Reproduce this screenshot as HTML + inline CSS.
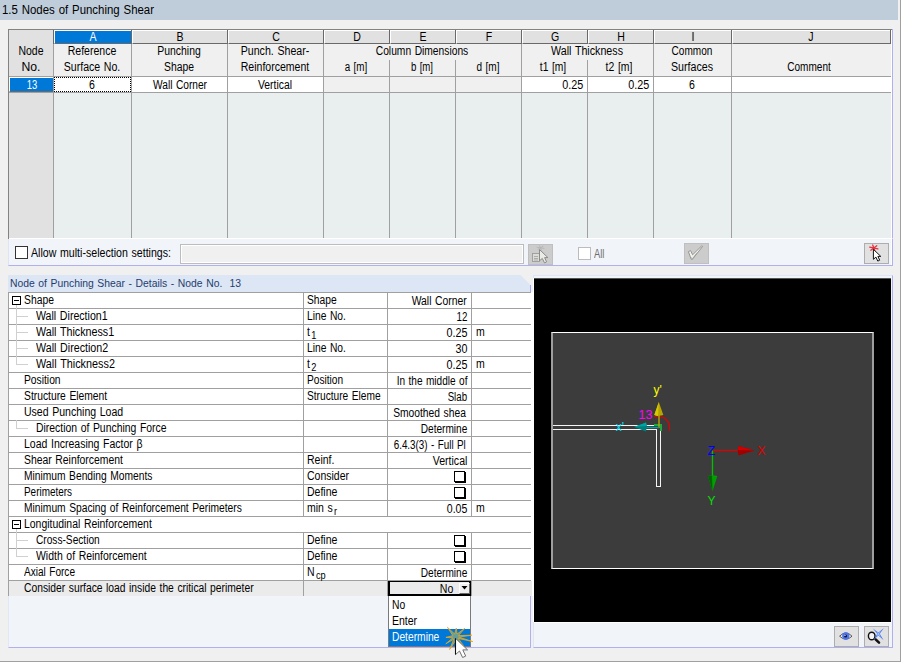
<!DOCTYPE html>
<html><head><meta charset="utf-8"><title>1.5 Nodes of Punching Shear</title>
<style>
html,body{margin:0;padding:0;}
body{width:901px;height:662px;position:relative;overflow:hidden;background:#f0f0f0;font-family:"Liberation Sans",sans-serif;}
body>div,body>span,body>svg{position:absolute;}
.t{white-space:nowrap;display:block;word-spacing:0.8px;}
sub{font-size:10.5px;vertical-align:baseline;position:relative;top:2.5px;margin-left:1.5px;line-height:0;}
</style></head><body>
<div style="left:0px;top:0px;width:898px;height:20px;background:#bfcddb;"></div>
<span class="t" style="left:2px;transform-origin:0 0;top:1px;font-size:12.5px;line-height:18px;color:#000;transform:scaleX(0.9128);">1.5 Nodes of Punching Shear</span>
<div style="left:900px;top:0px;width:1px;height:662px;background:#a0a0a0;"></div>
<div style="left:8px;top:29px;width:884px;height:209px;background:#e9eeee;border-left:1px solid #828282;border-top:1px solid #828282;box-sizing:border-box;"></div>
<div style="left:891px;top:30px;width:1px;height:208px;background:#fff;"></div>
<div style="left:892px;top:29px;width:1px;height:237px;background:#b0b0f0;"></div>
<div style="left:9px;top:30px;width:882px;height:46px;background:#f0f0f0;"></div>
<div style="left:9px;top:30px;width:44px;height:46px;background:#e1e1e1;"></div>
<div style="left:9px;top:92px;width:44px;height:146px;background:#e1e1e1;"></div>
<div style="left:54px;top:77px;width:837px;height:15px;background:#fff;"></div>
<div style="left:324px;top:77px;width:197px;height:15px;background:#f0f0f0;"></div>
<div style="left:54px;top:30px;width:77px;height:14px;background:#0078d7;box-sizing:border-box;border-top:1px solid #fff;border-left:1px solid #fff;border-bottom:1px solid #696969;"></div>
<span class="t" style="left:92.5px;transform-origin:50% 0;top:30px;font-size:12px;line-height:15px;color:#fff;transform:translateX(-50%) scaleX(0.88);">A</span>
<div style="left:132px;top:30px;width:95px;height:14px;background:#e1e1e1;box-sizing:border-box;border-top:1px solid #fff;border-left:1px solid #fff;border-bottom:1px solid #696969;"></div>
<span class="t" style="left:179.5px;transform-origin:50% 0;top:30px;font-size:12px;line-height:15px;color:#000;transform:translateX(-50%) scaleX(0.88);">B</span>
<div style="left:228px;top:30px;width:95px;height:14px;background:#e1e1e1;box-sizing:border-box;border-top:1px solid #fff;border-left:1px solid #fff;border-bottom:1px solid #696969;"></div>
<span class="t" style="left:275.5px;transform-origin:50% 0;top:30px;font-size:12px;line-height:15px;color:#000;transform:translateX(-50%) scaleX(0.88);">C</span>
<div style="left:324px;top:30px;width:65px;height:14px;background:#e1e1e1;box-sizing:border-box;border-top:1px solid #fff;border-left:1px solid #fff;border-bottom:1px solid #696969;"></div>
<span class="t" style="left:356.5px;transform-origin:50% 0;top:30px;font-size:12px;line-height:15px;color:#000;transform:translateX(-50%) scaleX(0.88);">D</span>
<div style="left:390px;top:30px;width:65px;height:14px;background:#e1e1e1;box-sizing:border-box;border-top:1px solid #fff;border-left:1px solid #fff;border-bottom:1px solid #696969;"></div>
<span class="t" style="left:422.5px;transform-origin:50% 0;top:30px;font-size:12px;line-height:15px;color:#000;transform:translateX(-50%) scaleX(0.88);">E</span>
<div style="left:456px;top:30px;width:65px;height:14px;background:#e1e1e1;box-sizing:border-box;border-top:1px solid #fff;border-left:1px solid #fff;border-bottom:1px solid #696969;"></div>
<span class="t" style="left:488.5px;transform-origin:50% 0;top:30px;font-size:12px;line-height:15px;color:#000;transform:translateX(-50%) scaleX(0.88);">F</span>
<div style="left:522px;top:30px;width:65px;height:14px;background:#e1e1e1;box-sizing:border-box;border-top:1px solid #fff;border-left:1px solid #fff;border-bottom:1px solid #696969;"></div>
<span class="t" style="left:554.5px;transform-origin:50% 0;top:30px;font-size:12px;line-height:15px;color:#000;transform:translateX(-50%) scaleX(0.88);">G</span>
<div style="left:588px;top:30px;width:65px;height:14px;background:#e1e1e1;box-sizing:border-box;border-top:1px solid #fff;border-left:1px solid #fff;border-bottom:1px solid #696969;"></div>
<span class="t" style="left:620.5px;transform-origin:50% 0;top:30px;font-size:12px;line-height:15px;color:#000;transform:translateX(-50%) scaleX(0.88);">H</span>
<div style="left:654px;top:30px;width:77px;height:14px;background:#e1e1e1;box-sizing:border-box;border-top:1px solid #fff;border-left:1px solid #fff;border-bottom:1px solid #696969;"></div>
<span class="t" style="left:692.5px;transform-origin:50% 0;top:30px;font-size:12px;line-height:15px;color:#000;transform:translateX(-50%) scaleX(0.88);">I</span>
<div style="left:732px;top:30px;width:158px;height:14px;background:#e1e1e1;box-sizing:border-box;border-top:1px solid #fff;border-left:1px solid #fff;border-bottom:1px solid #696969;"></div>
<span class="t" style="left:811.0px;transform-origin:50% 0;top:30px;font-size:12px;line-height:15px;color:#000;transform:translateX(-50%) scaleX(0.88);">J</span>
<div style="left:53px;top:44px;width:1px;height:194px;background:#a0a0a0;"></div>
<div style="left:53px;top:30px;width:1px;height:14px;background:#696969;"></div>
<div style="left:131px;top:44px;width:1px;height:194px;background:#a0a0a0;"></div>
<div style="left:131px;top:30px;width:1px;height:14px;background:#696969;"></div>
<div style="left:227px;top:44px;width:1px;height:194px;background:#a0a0a0;"></div>
<div style="left:227px;top:30px;width:1px;height:14px;background:#696969;"></div>
<div style="left:323px;top:44px;width:1px;height:194px;background:#a0a0a0;"></div>
<div style="left:323px;top:30px;width:1px;height:14px;background:#696969;"></div>
<div style="left:389px;top:60px;width:1px;height:178px;background:#a0a0a0;"></div>
<div style="left:389px;top:30px;width:1px;height:14px;background:#696969;"></div>
<div style="left:455px;top:60px;width:1px;height:178px;background:#a0a0a0;"></div>
<div style="left:455px;top:30px;width:1px;height:14px;background:#696969;"></div>
<div style="left:521px;top:44px;width:1px;height:194px;background:#a0a0a0;"></div>
<div style="left:521px;top:30px;width:1px;height:14px;background:#696969;"></div>
<div style="left:587px;top:60px;width:1px;height:178px;background:#a0a0a0;"></div>
<div style="left:587px;top:30px;width:1px;height:14px;background:#696969;"></div>
<div style="left:653px;top:44px;width:1px;height:194px;background:#a0a0a0;"></div>
<div style="left:653px;top:30px;width:1px;height:14px;background:#696969;"></div>
<div style="left:731px;top:44px;width:1px;height:194px;background:#a0a0a0;"></div>
<div style="left:731px;top:30px;width:1px;height:14px;background:#696969;"></div>
<div style="left:890px;top:30px;width:1px;height:14px;background:#696969;"></div>
<div style="left:9px;top:76px;width:882px;height:1px;background:#a0a0a0;"></div>
<div style="left:9px;top:92px;width:882px;height:1px;background:#a0a0a0;"></div>
<div style="left:9px;top:77px;width:44px;height:15px;background:#0078d7;box-sizing:border-box;border-top:1px solid #fff;border-left:1px solid #fff;border-bottom:1px solid #696969;"></div>
<span class="t" style="left:32.3px;transform-origin:50% 0;top:76.5px;font-size:12px;line-height:16px;color:#fff;transform:translateX(-50%) scaleX(0.786);">13</span>
<div style="left:54px;top:77px;width:77px;height:15px;border:1px dotted #000;box-sizing:border-box;"></div>
<span class="t" style="left:31px;transform-origin:50% 0;top:43px;font-size:12px;line-height:16px;color:#000;transform:translateX(-50%) scaleX(0.8715);">Node</span>
<span class="t" style="left:31px;transform-origin:50% 0;top:59px;font-size:12px;line-height:16px;color:#000;transform:translateX(-50%) scaleX(1.0167);">No.</span>
<span class="t" style="left:92px;transform-origin:50% 0;top:43px;font-size:12px;line-height:16px;color:#000;transform:translateX(-50%) scaleX(0.8777);">Reference</span>
<span class="t" style="left:92px;transform-origin:50% 0;top:59px;font-size:12px;line-height:16px;color:#000;transform:translateX(-50%) scaleX(0.8804);">Surface No.</span>
<span class="t" style="left:179px;transform-origin:50% 0;top:43px;font-size:12px;line-height:16px;color:#000;transform:translateX(-50%) scaleX(0.8692);">Punching</span>
<span class="t" style="left:179px;transform-origin:50% 0;top:59px;font-size:12px;line-height:16px;color:#000;transform:translateX(-50%) scaleX(0.8645);">Shape</span>
<span class="t" style="left:274.8px;transform-origin:50% 0;top:43px;font-size:12px;line-height:16px;color:#000;transform:translateX(-50%) scaleX(0.8837);">Punch. Shear-</span>
<span class="t" style="left:274.8px;transform-origin:50% 0;top:59px;font-size:12px;line-height:16px;color:#000;transform:translateX(-50%) scaleX(0.8777);">Reinforcement</span>
<span class="t" style="left:422px;transform-origin:50% 0;top:43px;font-size:12px;line-height:16px;color:#000;transform:translateX(-50%) scaleX(0.855);">Column Dimensions</span>
<span class="t" style="left:356px;transform-origin:50% 0;top:59px;font-size:12px;line-height:16px;color:#000;transform:translateX(-50%) scaleX(0.8186);">a [m]</span>
<span class="t" style="left:422px;transform-origin:50% 0;top:59px;font-size:12px;line-height:16px;color:#000;transform:translateX(-50%) scaleX(0.8005);">b [m]</span>
<span class="t" style="left:488px;transform-origin:50% 0;top:59px;font-size:12px;line-height:16px;color:#000;transform:translateX(-50%) scaleX(0.8368);">d [m]</span>
<span class="t" style="left:587.3px;transform-origin:50% 0;top:43px;font-size:12px;line-height:16px;color:#000;transform:translateX(-50%) scaleX(0.8908);">Wall Thickness</span>
<span class="t" style="left:553px;transform-origin:50% 0;top:59px;font-size:12px;line-height:16px;color:#000;transform:translateX(-50%) scaleX(0.8568);">t1 [m]</span>
<span class="t" style="left:619.4px;transform-origin:50% 0;top:59px;font-size:12px;line-height:16px;color:#000;transform:translateX(-50%) scaleX(0.8698);">t2 [m]</span>
<span class="t" style="left:692px;transform-origin:50% 0;top:43px;font-size:12px;line-height:16px;color:#000;transform:translateX(-50%) scaleX(0.838);">Common</span>
<span class="t" style="left:692px;transform-origin:50% 0;top:59px;font-size:12px;line-height:16px;color:#000;transform:translateX(-50%) scaleX(0.8868);">Surfaces</span>
<span class="t" style="left:809px;transform-origin:50% 0;top:59px;font-size:12px;line-height:16px;color:#000;transform:translateX(-50%) scaleX(0.8363);">Comment</span>
<span class="t" style="left:92px;transform-origin:50% 0;top:77px;font-size:12px;line-height:16px;color:#000;transform:translateX(-50%) scaleX(0.88);">6</span>
<span class="t" style="left:179.5px;transform-origin:50% 0;top:77px;font-size:12px;line-height:16px;color:#000;transform:translateX(-50%) scaleX(0.8477);">Wall Corner</span>
<span class="t" style="left:274.8px;transform-origin:50% 0;top:77px;font-size:12px;line-height:16px;color:#000;transform:translateX(-50%) scaleX(0.8638);">Vertical</span>
<span class="t" style="right:318px;transform-origin:100% 0;top:77px;font-size:12px;line-height:16px;color:#000;transform:scaleX(0.899);">0.25</span>
<span class="t" style="right:252px;transform-origin:100% 0;top:77px;font-size:12px;line-height:16px;color:#000;transform:scaleX(0.899);">0.25</span>
<span class="t" style="left:692px;transform-origin:50% 0;top:77px;font-size:12px;line-height:16px;color:#000;transform:translateX(-50%) scaleX(0.88);">6</span>
<div style="left:8px;top:238px;width:885px;height:28px;background:#f1f4f9;box-sizing:border-box;border-bottom:1px solid #b0b0f0;border-right:1px solid #b0b0f0;border-top:1px solid #fff;border-left:1px solid #dfe3f7;"></div>
<div style="left:8px;top:238px;width:1px;height:1px;background:#828282;"></div>
<div style="left:891px;top:238px;width:1px;height:27px;background:#fff;"></div>
<div style="left:15px;top:246px;width:13px;height:13px;background:#fff;box-sizing:border-box;border:1px solid #333;"></div>
<span class="t" style="left:31px;transform-origin:0 0;top:245px;font-size:12px;line-height:17px;color:#000;transform:scaleX(0.8842);">Allow multi-selection settings:</span>
<div style="left:180px;top:244px;width:344px;height:20px;background:#f0f0f0;box-sizing:border-box;border:1px solid #bcbcbc;box-shadow:inset 0 0 0 1px #fff;"></div>
<div style="left:528px;top:244px;width:25px;height:21px;background:#cccccc;box-sizing:border-box;border:1px solid #bfbfbf;"></div>
<svg style="left:528px;top:244px" width="25" height="21" viewBox="528 244 25 21"><rect x="532.5" y="253.5" width="7" height="8" fill="#dcdcd6" stroke="#9c9c9c" stroke-width="0.9"/><path d="M534 256.5H538M534 258.5H538M534 260H538" stroke="#a0a0a0" stroke-width="0.8"/><path d="M537.0 247.2L544.0 248.4" stroke="#b4b4b4" stroke-width="0.9" stroke-linecap="round"/><path d="M539.6 245.7L541.4 249.9" stroke="#b4b4b4" stroke-width="0.9" stroke-linecap="round"/><path d="M543.0 246.3L538.0 249.3" stroke="#b4b4b4" stroke-width="0.9" stroke-linecap="round"/><polygon points="539.5,249.5 539.5,260.8 542.3,258.4 544.5,262.9 546.6,261.9 544.6,257.6 547.9,257.6" fill="#ecece6" stroke="#8a8a8a" stroke-width="1" stroke-linejoin="round"/></svg>
<div style="left:578px;top:247px;width:13px;height:13px;background:#fff;box-sizing:border-box;border:1px solid #bcbcbc;"></div>
<span class="t" style="left:594px;transform-origin:0 0;top:246px;font-size:12px;line-height:17px;color:#6d6d6d;transform:scaleX(0.7794);">All</span>
<div style="left:684px;top:243px;width:25px;height:21px;background:#cccccc;box-sizing:border-box;border:1px solid #bfbfbf;"></div>
<svg style="left:684px;top:243px" width="25" height="21" viewBox="684 243 25 21"><path d="M688.4 251.6L690.6 250.6L692.6 254.8L701.8 245.8L702.6 246.4L692.4 259.4L691.2 259.2Z" fill="#f1f1ed" stroke="#8c8c88" stroke-width="0.9" stroke-linejoin="round"/><path d="M691 257.6L692.3 258.8L697 252.8" fill="none" stroke="#a0a09c" stroke-width="0.8"/></svg>
<div style="left:864px;top:243px;width:25px;height:21px;background:#e1e1e1;box-sizing:border-box;border:1px solid #adadad;"></div>
<svg style="left:864px;top:243px" width="25" height="21" viewBox="864 243 25 21"><path d="M869.7 247.2L877.9 248.8" stroke="#e8303a" stroke-width="1.3" stroke-linecap="round"/><path d="M872.7 245.0L874.9 251.0" stroke="#e8303a" stroke-width="1.3" stroke-linecap="round"/><path d="M876.8 245.8L870.8 250.2" stroke="#e8303a" stroke-width="1.3" stroke-linecap="round"/><polygon points="873.4,249.3 873.4,259.3 875.9,257.1 877.8,261.1 879.7,260.2 877.9,256.4 880.8,256.4" fill="#fff" stroke="#111" stroke-width="1" stroke-linejoin="round"/></svg>
<div style="left:8px;top:292px;width:523px;height:356px;background:#f1f4f9;box-sizing:border-box;border-bottom:1px solid #b0b0f0;border-right:1px solid #b0b0f0;border-left:1px solid #e2e6f8;"></div>
<svg style="left:8px;top:275px" width="524" height="17"><polygon points="0,0 512.5,0 523,10.5 523,17 0,17" fill="#dce6f4"/><rect x="522" y="10" width="1" height="7" fill="#a8a8f0"/></svg>
<span class="t" style="left:10px;transform-origin:0 0;top:275px;font-size:11.5px;line-height:17px;color:#263c6e;transform:scaleX(0.9);">Node of Punching Shear - Details - Node No.&nbsp; 13</span>
<div style="left:8px;top:292px;width:526px;height:304px;background:#fff;"></div>
<div style="left:8px;top:308px;width:523px;height:1px;background:#a0a0a0;"></div>
<div style="left:8px;top:292px;width:523px;height:1px;background:#a0a0a0;"></div>
<span class="t" style="left:24px;transform-origin:0 0;top:292.2px;font-size:12px;line-height:16px;color:#000;transform:scaleX(0.8616);">Shape</span>
<span class="t" style="left:307.2px;transform-origin:0 0;top:292.2px;font-size:12px;line-height:16px;color:#000;transform:scaleX(0.8558);">Shape</span>
<span class="t" style="right:434px;transform-origin:100% 0;top:293px;font-size:12px;line-height:16px;color:#000;transform:scaleX(0.8634);">Wall Corner</span>
<div style="left:12px;top:296px;width:9px;height:9px;background:#fff;box-sizing:border-box;border:1px solid #000;"></div>
<div style="left:14px;top:300px;width:5px;height:1px;background:#000;"></div>
<div style="left:16px;top:305px;width:1px;height:3px;background:#d0d0d0;"></div>
<div style="left:8px;top:324px;width:523px;height:1px;background:#a0a0a0;"></div>
<span class="t" style="left:36px;transform-origin:0 0;top:308.2px;font-size:12px;line-height:16px;color:#000;transform:scaleX(0.8834);">Wall Direction1</span>
<span class="t" style="left:307.2px;transform-origin:0 0;top:308.2px;font-size:12px;line-height:16px;color:#000;transform:scaleX(0.8549);">Line No.</span>
<span class="t" style="right:434px;transform-origin:100% 0;top:309px;font-size:12px;line-height:16px;color:#000;transform:scaleX(0.8159);">12</span>
<div style="left:16px;top:308px;width:1px;height:16px;background:#d0d0d0;"></div>
<div style="left:16px;top:316px;width:12px;height:1px;background:#d0d0d0;"></div>
<div style="left:8px;top:340px;width:523px;height:1px;background:#a0a0a0;"></div>
<span class="t" style="left:36px;transform-origin:0 0;top:324.2px;font-size:12px;line-height:16px;color:#000;transform:scaleX(0.8937);">Wall Thickness1</span>
<span class="t" style="left:307.2px;transform-origin:0 0;top:324.2px;font-size:12px;line-height:16px;color:#000;transform:scaleX(0.875);">t<sub>1</sub></span>
<span class="t" style="right:434px;transform-origin:100% 0;top:325px;font-size:12px;line-height:16px;color:#000;transform:scaleX(0.8947);">0.25</span>
<span class="t" style="left:476px;transform-origin:0 0;top:324.2px;font-size:12px;line-height:16px;color:#000;transform:scaleX(0.875);">m</span>
<div style="left:16px;top:324px;width:1px;height:16px;background:#d0d0d0;"></div>
<div style="left:16px;top:332px;width:12px;height:1px;background:#d0d0d0;"></div>
<div style="left:8px;top:356px;width:523px;height:1px;background:#a0a0a0;"></div>
<span class="t" style="left:36px;transform-origin:0 0;top:340.2px;font-size:12px;line-height:16px;color:#000;transform:scaleX(0.8908);">Wall Direction2</span>
<span class="t" style="left:307.2px;transform-origin:0 0;top:340.2px;font-size:12px;line-height:16px;color:#000;transform:scaleX(0.8549);">Line No.</span>
<span class="t" style="right:434px;transform-origin:100% 0;top:341px;font-size:12px;line-height:16px;color:#000;transform:scaleX(0.8908);">30</span>
<div style="left:16px;top:340px;width:1px;height:16px;background:#d0d0d0;"></div>
<div style="left:16px;top:348px;width:12px;height:1px;background:#d0d0d0;"></div>
<div style="left:8px;top:372px;width:523px;height:1px;background:#a0a0a0;"></div>
<span class="t" style="left:36px;transform-origin:0 0;top:356.2px;font-size:12px;line-height:16px;color:#000;transform:scaleX(0.9017);">Wall Thickness2</span>
<span class="t" style="left:307.2px;transform-origin:0 0;top:356.2px;font-size:12px;line-height:16px;color:#000;transform:scaleX(0.875);">t<sub>2</sub></span>
<span class="t" style="right:434px;transform-origin:100% 0;top:357px;font-size:12px;line-height:16px;color:#000;transform:scaleX(0.8947);">0.25</span>
<span class="t" style="left:476px;transform-origin:0 0;top:356.2px;font-size:12px;line-height:16px;color:#000;transform:scaleX(0.875);">m</span>
<div style="left:16px;top:356px;width:1px;height:9px;background:#d0d0d0;"></div>
<div style="left:16px;top:364px;width:12px;height:1px;background:#d0d0d0;"></div>
<div style="left:8px;top:388px;width:523px;height:1px;background:#a0a0a0;"></div>
<span class="t" style="left:24px;transform-origin:0 0;top:372.2px;font-size:12px;line-height:16px;color:#000;transform:scaleX(0.8571);">Position</span>
<span class="t" style="left:307.2px;transform-origin:0 0;top:372.2px;font-size:12px;line-height:16px;color:#000;transform:scaleX(0.8454);">Position</span>
<span class="t" style="right:434px;transform-origin:100% 0;top:373px;font-size:12px;line-height:16px;color:#000;transform:scaleX(0.8383);">In the middle of</span>
<div style="left:8px;top:404px;width:523px;height:1px;background:#a0a0a0;"></div>
<span class="t" style="left:24px;transform-origin:0 0;top:388.2px;font-size:12px;line-height:16px;color:#000;transform:scaleX(0.8591);">Structure Element</span>
<span class="t" style="left:307.2px;transform-origin:0 0;top:388.2px;font-size:12px;line-height:16px;color:#000;transform:scaleX(0.8475);">Structure Eleme</span>
<span class="t" style="right:434px;transform-origin:100% 0;top:389px;font-size:12px;line-height:16px;color:#000;transform:scaleX(0.8073);">Slab</span>
<div style="left:8px;top:420px;width:523px;height:1px;background:#a0a0a0;"></div>
<span class="t" style="left:24px;transform-origin:0 0;top:404.2px;font-size:12px;line-height:16px;color:#000;transform:scaleX(0.8776);">Used Punching Load</span>
<span class="t" style="right:435.3px;transform-origin:100% 0;top:405px;font-size:12px;line-height:16px;color:#000;transform:scaleX(0.8567);">Smoothed shea</span>
<div style="left:8px;top:436px;width:523px;height:1px;background:#a0a0a0;"></div>
<span class="t" style="left:36px;transform-origin:0 0;top:420.2px;font-size:12px;line-height:16px;color:#000;transform:scaleX(0.8672);">Direction of Punching Force</span>
<span class="t" style="right:434px;transform-origin:100% 0;top:421px;font-size:12px;line-height:16px;color:#000;transform:scaleX(0.8418);">Determine</span>
<div style="left:16px;top:420px;width:1px;height:9px;background:#d0d0d0;"></div>
<div style="left:16px;top:428px;width:12px;height:1px;background:#d0d0d0;"></div>
<div style="left:8px;top:452px;width:523px;height:1px;background:#a0a0a0;"></div>
<span class="t" style="left:24px;transform-origin:0 0;top:436.2px;font-size:12px;line-height:16px;color:#000;transform:scaleX(0.8753);">Load Increasing Factor β</span>
<span class="t" style="right:435.3px;transform-origin:100% 0;top:437px;font-size:12px;line-height:16px;color:#000;transform:scaleX(0.8215);">6.4.3(3) - Full Pl</span>
<div style="left:8px;top:468px;width:523px;height:1px;background:#a0a0a0;"></div>
<span class="t" style="left:24px;transform-origin:0 0;top:452.2px;font-size:12px;line-height:16px;color:#000;transform:scaleX(0.866);">Shear Reinforcement</span>
<span class="t" style="left:307.2px;transform-origin:0 0;top:452.2px;font-size:12px;line-height:16px;color:#000;transform:scaleX(0.875);">Reinf.</span>
<span class="t" style="right:434px;transform-origin:100% 0;top:453px;font-size:12px;line-height:16px;color:#000;transform:scaleX(0.88);">Vertical</span>
<div style="left:8px;top:484px;width:523px;height:1px;background:#a0a0a0;"></div>
<span class="t" style="left:24px;transform-origin:0 0;top:468.2px;font-size:12px;line-height:16px;color:#000;transform:scaleX(0.8541);">Minimum Bending Moments</span>
<span class="t" style="left:307.2px;transform-origin:0 0;top:468.2px;font-size:12px;line-height:16px;color:#000;transform:scaleX(0.875);">Consider</span>
<div style="left:454px;top:471px;width:11px;height:11px;background:#fff;box-sizing:border-box;border:1px solid #000;box-shadow:1px 1px 0 #000;"></div>
<div style="left:8px;top:500px;width:523px;height:1px;background:#a0a0a0;"></div>
<span class="t" style="left:24px;transform-origin:0 0;top:484.2px;font-size:12px;line-height:16px;color:#000;transform:scaleX(0.8274);">Perimeters</span>
<span class="t" style="left:307.2px;transform-origin:0 0;top:484.2px;font-size:12px;line-height:16px;color:#000;transform:scaleX(0.875);">Define</span>
<div style="left:454px;top:487px;width:11px;height:11px;background:#fff;box-sizing:border-box;border:1px solid #000;box-shadow:1px 1px 0 #000;"></div>
<div style="left:8px;top:516px;width:523px;height:1px;background:#a0a0a0;"></div>
<span class="t" style="left:24px;transform-origin:0 0;top:500.2px;font-size:12px;line-height:16px;color:#000;transform:scaleX(0.8557);">Minimum Spacing of Reinforcement Perimeters</span>
<span class="t" style="left:307.2px;transform-origin:0 0;top:500.2px;font-size:12px;line-height:16px;color:#000;transform:scaleX(0.875);">min s<sub>r</sub></span>
<span class="t" style="right:434px;transform-origin:100% 0;top:501px;font-size:12px;line-height:16px;color:#000;transform:scaleX(0.88);">0.05</span>
<span class="t" style="left:476px;transform-origin:0 0;top:500.2px;font-size:12px;line-height:16px;color:#000;transform:scaleX(0.875);">m</span>
<div style="left:8px;top:532px;width:523px;height:1px;background:#a0a0a0;"></div>
<span class="t" style="left:24px;transform-origin:0 0;top:516.2px;font-size:12px;line-height:16px;color:#000;transform:scaleX(0.8699);">Longitudinal Reinforcement</span>
<div style="left:12px;top:520px;width:9px;height:9px;background:#fff;box-sizing:border-box;border:1px solid #000;"></div>
<div style="left:14px;top:524px;width:5px;height:1px;background:#000;"></div>
<div style="left:16px;top:529px;width:1px;height:3px;background:#d0d0d0;"></div>
<div style="left:8px;top:548px;width:523px;height:1px;background:#a0a0a0;"></div>
<span class="t" style="left:36px;transform-origin:0 0;top:532.2px;font-size:12px;line-height:16px;color:#000;transform:scaleX(0.8453);">Cross-Section</span>
<span class="t" style="left:307.2px;transform-origin:0 0;top:532.2px;font-size:12px;line-height:16px;color:#000;transform:scaleX(0.875);">Define</span>
<div style="left:454px;top:535px;width:11px;height:11px;background:#fff;box-sizing:border-box;border:1px solid #000;box-shadow:1px 1px 0 #000;"></div>
<div style="left:16px;top:532px;width:1px;height:16px;background:#d0d0d0;"></div>
<div style="left:16px;top:540px;width:12px;height:1px;background:#d0d0d0;"></div>
<div style="left:8px;top:564px;width:523px;height:1px;background:#a0a0a0;"></div>
<span class="t" style="left:36px;transform-origin:0 0;top:548.2px;font-size:12px;line-height:16px;color:#000;transform:scaleX(0.8709);">Width of Reinforcement</span>
<span class="t" style="left:307.2px;transform-origin:0 0;top:548.2px;font-size:12px;line-height:16px;color:#000;transform:scaleX(0.875);">Define</span>
<div style="left:454px;top:551px;width:11px;height:11px;background:#fff;box-sizing:border-box;border:1px solid #000;box-shadow:1px 1px 0 #000;"></div>
<div style="left:16px;top:548px;width:1px;height:9px;background:#d0d0d0;"></div>
<div style="left:16px;top:556px;width:12px;height:1px;background:#d0d0d0;"></div>
<div style="left:8px;top:580px;width:523px;height:1px;background:#a0a0a0;"></div>
<span class="t" style="left:24px;transform-origin:0 0;top:564.2px;font-size:12px;line-height:16px;color:#000;transform:scaleX(0.8384);">Axial Force</span>
<span class="t" style="left:307.2px;transform-origin:0 0;top:564.2px;font-size:12px;line-height:16px;color:#000;transform:scaleX(0.875);">N<sub>cp</sub></span>
<span class="t" style="right:434px;transform-origin:100% 0;top:565px;font-size:12px;line-height:16px;color:#000;transform:scaleX(0.8418);">Determine</span>
<div style="left:9px;top:581px;width:523px;height:15px;background:#ebebeb;"></div>
<span class="t" style="left:24px;transform-origin:0 0;top:580.2px;font-size:12px;line-height:16px;color:#000;transform:scaleX(0.858);">Consider surface load inside the critical perimeter</span>
<div style="left:8px;top:292px;width:1px;height:304px;background:#a0a0a0;"></div>
<div style="left:303px;top:292px;width:1px;height:16px;background:#a0a0a0;"></div>
<div style="left:303px;top:308px;width:1px;height:16px;background:#a0a0a0;"></div>
<div style="left:303px;top:324px;width:1px;height:16px;background:#a0a0a0;"></div>
<div style="left:303px;top:340px;width:1px;height:16px;background:#a0a0a0;"></div>
<div style="left:303px;top:356px;width:1px;height:16px;background:#a0a0a0;"></div>
<div style="left:303px;top:372px;width:1px;height:16px;background:#a0a0a0;"></div>
<div style="left:303px;top:388px;width:1px;height:16px;background:#a0a0a0;"></div>
<div style="left:303px;top:404px;width:1px;height:16px;background:#a0a0a0;"></div>
<div style="left:303px;top:420px;width:1px;height:16px;background:#a0a0a0;"></div>
<div style="left:303px;top:436px;width:1px;height:16px;background:#a0a0a0;"></div>
<div style="left:303px;top:452px;width:1px;height:16px;background:#a0a0a0;"></div>
<div style="left:303px;top:468px;width:1px;height:16px;background:#a0a0a0;"></div>
<div style="left:303px;top:484px;width:1px;height:16px;background:#a0a0a0;"></div>
<div style="left:303px;top:500px;width:1px;height:16px;background:#a0a0a0;"></div>
<div style="left:303px;top:532px;width:1px;height:16px;background:#a0a0a0;"></div>
<div style="left:303px;top:548px;width:1px;height:16px;background:#a0a0a0;"></div>
<div style="left:303px;top:564px;width:1px;height:16px;background:#a0a0a0;"></div>
<div style="left:303px;top:580px;width:1px;height:16px;background:#a0a0a0;"></div>
<div style="left:387px;top:292px;width:1px;height:16px;background:#a0a0a0;"></div>
<div style="left:387px;top:308px;width:1px;height:16px;background:#a0a0a0;"></div>
<div style="left:387px;top:324px;width:1px;height:16px;background:#a0a0a0;"></div>
<div style="left:387px;top:340px;width:1px;height:16px;background:#a0a0a0;"></div>
<div style="left:387px;top:356px;width:1px;height:16px;background:#a0a0a0;"></div>
<div style="left:387px;top:372px;width:1px;height:16px;background:#a0a0a0;"></div>
<div style="left:387px;top:388px;width:1px;height:16px;background:#a0a0a0;"></div>
<div style="left:387px;top:404px;width:1px;height:16px;background:#a0a0a0;"></div>
<div style="left:387px;top:420px;width:1px;height:16px;background:#a0a0a0;"></div>
<div style="left:387px;top:436px;width:1px;height:16px;background:#a0a0a0;"></div>
<div style="left:387px;top:452px;width:1px;height:16px;background:#a0a0a0;"></div>
<div style="left:387px;top:468px;width:1px;height:16px;background:#a0a0a0;"></div>
<div style="left:387px;top:484px;width:1px;height:16px;background:#a0a0a0;"></div>
<div style="left:387px;top:500px;width:1px;height:16px;background:#a0a0a0;"></div>
<div style="left:387px;top:532px;width:1px;height:16px;background:#a0a0a0;"></div>
<div style="left:387px;top:548px;width:1px;height:16px;background:#a0a0a0;"></div>
<div style="left:387px;top:564px;width:1px;height:16px;background:#a0a0a0;"></div>
<div style="left:387px;top:580px;width:1px;height:16px;background:#a0a0a0;"></div>
<div style="left:471px;top:292px;width:1px;height:16px;background:#a0a0a0;"></div>
<div style="left:471px;top:308px;width:1px;height:16px;background:#a0a0a0;"></div>
<div style="left:471px;top:324px;width:1px;height:16px;background:#a0a0a0;"></div>
<div style="left:471px;top:340px;width:1px;height:16px;background:#a0a0a0;"></div>
<div style="left:471px;top:356px;width:1px;height:16px;background:#a0a0a0;"></div>
<div style="left:471px;top:372px;width:1px;height:16px;background:#a0a0a0;"></div>
<div style="left:471px;top:388px;width:1px;height:16px;background:#a0a0a0;"></div>
<div style="left:471px;top:404px;width:1px;height:16px;background:#a0a0a0;"></div>
<div style="left:471px;top:420px;width:1px;height:16px;background:#a0a0a0;"></div>
<div style="left:471px;top:436px;width:1px;height:16px;background:#a0a0a0;"></div>
<div style="left:471px;top:452px;width:1px;height:16px;background:#a0a0a0;"></div>
<div style="left:471px;top:468px;width:1px;height:16px;background:#a0a0a0;"></div>
<div style="left:471px;top:484px;width:1px;height:16px;background:#a0a0a0;"></div>
<div style="left:471px;top:500px;width:1px;height:16px;background:#a0a0a0;"></div>
<div style="left:471px;top:532px;width:1px;height:16px;background:#a0a0a0;"></div>
<div style="left:471px;top:548px;width:1px;height:16px;background:#a0a0a0;"></div>
<div style="left:471px;top:564px;width:1px;height:16px;background:#a0a0a0;"></div>
<div style="left:471px;top:580px;width:1px;height:16px;background:#a0a0a0;"></div>
<div style="left:388px;top:581px;width:83px;height:15px;background:#ebebeb;box-sizing:border-box;border:2px solid #000;border-top-width:1px;"></div>
<span class="t" style="right:448px;transform-origin:100% 0;top:581px;font-size:12px;line-height:16px;color:#000;transform:scaleX(0.88);">No</span>
<div style="left:459px;top:583px;width:11px;height:11px;background:#f0f0f0;box-sizing:border-box;border:1px solid #fff;border-right-color:#696969;border-bottom-color:#696969;"></div>
<svg style="left:461px;top:586px" width="7" height="4"><polygon points="0.5,0 6.5,0 3.5,3.5" fill="#000"/></svg>
<div style="left:388px;top:596px;width:83px;height:51px;background:#fff;box-sizing:border-box;border:1px solid #7a7a7a;border-top:0;"></div>
<span class="t" style="left:392px;transform-origin:0 0;top:597px;font-size:12px;line-height:16px;color:#000;transform:scaleX(0.86);">No</span>
<span class="t" style="left:392px;transform-origin:0 0;top:613px;font-size:12px;line-height:16px;color:#000;transform:scaleX(0.876);">Enter</span>
<div style="left:389px;top:629px;width:81px;height:17px;background:#0078d7;"></div>
<span class="t" style="left:392px;transform-origin:0 0;top:629px;font-size:12px;line-height:16px;color:#fff;transform:scaleX(0.855);">Determine</span>
<svg style="left:436px;top:620px" width="50" height="42" viewBox="436 620 50 42"><polygon points="447.4,627.3 454.7,634.0 456.3,628.0 457.0,634.1 464.9,628.2 458.4,635.6 471.9,635.2 458.7,637.1 472.8,641.6 458.2,638.4 463.7,645.8 456.1,639.8 449.6,649.5 453.8,639.1 445.8,643.8 452.9,637.8 445.9,637.4 452.9,635.6" fill="#7aa98f" fill-opacity="0.8" stroke="#eda818" stroke-width="0.8" stroke-linejoin="round"/><polygon points="455.5,638.3 455.5,654.6 459.5,651.0 462.6,657.5 465.7,656.1 462.8,649.9 467.6,649.9" fill="#fff" stroke="#707070" stroke-width="1" stroke-linejoin="round"/><path d="M455.5 638.3V654.5" stroke="#111" stroke-width="1.1"/></svg>
<div style="left:533px;top:275px;width:360px;height:373px;background:#f1f4f9;box-sizing:border-box;border:1px solid #b0b0f0;border-top-color:#dce6f8;border-left-color:#dde5f6;"></div>
<div style="left:534px;top:622px;width:357px;height:1px;background:#fff;"></div>
<div style="left:533px;top:278px;width:1px;height:344px;background:#fff;"></div>
<div style="left:534px;top:278px;width:357px;height:344px;background:#000;box-sizing:border-box;border-top:1px solid #555;"></div>
<div style="left:551px;top:332px;width:323px;height:237px;background:#3c3c3c;box-sizing:border-box;border:1px solid #fff;border-left:2px solid #9e9e9e;border-right:2px solid #9e9e9e;"></div>
<svg style="left:551px;top:331px" width="323" height="238" viewBox="551 331 323 238" font-family="Liberation Sans, sans-serif">
<g fill="none" stroke="#f4f4f4" stroke-width="1" shape-rendering="crispEdges">
<path d="M553 425.5H660.5V486.5H656.5V429.5H553"/>
</g>
<path d="M654 425H661V431" fill="none" stroke="#1fa83c" stroke-width="2"/>
<path d="M654 416.5H659A10.5 10.5 0 0 1 669.5 427V431" fill="none" stroke="#e00000" stroke-width="1.2"/>
<path d="M659 428V414" stroke="#b8aa00" stroke-width="1.4"/>
<path d="M658.8 402L654.3 415Q658.8 416.6 663.3 415Z" fill="#b8a600"/>
<path d="M658.8 402L654.3 415Q656.5 415.9 658 416Z" fill="#d8c800"/>
<path d="M659 427.5H645" stroke="#00a0a0" stroke-width="1.4"/>
<path d="M634 427L646 422.5Q647.4 427 646 431.5Z" fill="#007f7f"/>
<path d="M634 427L646 422.5Q646.8 424.5 646.9 426Z" fill="#00a3a3"/>
<text x="653.5" y="393.5" font-size="12" fill="#ffff00">y'</text>
<text x="638.5" y="419" font-size="12" fill="#ff00ff" textLength="14" lengthAdjust="spacingAndGlyphs">13</text>
<text x="615.8" y="431.2" font-size="12" fill="#00e0ff">x'</text>
<path d="M712.5 450.5H740" stroke="#e00000" stroke-width="1.3"/>
<path d="M754.5 450.5L738.5 446Q737 450.5 738.5 455.5Z" fill="#a00000"/>
<path d="M754.5 450.5L738.5 446Q738 448 738 450Z" fill="#d00000"/>
<path d="M712.5 450.5V478" stroke="#00c000" stroke-width="1.3"/>
<path d="M712.5 491.5L708 476Q712.5 474.6 717.3 476Z" fill="#00a000"/>
<path d="M712.5 491.5L708 476Q710 475.4 712 475.4Z" fill="#006400"/>
<text x="707.6" y="455.3" font-size="12.5" fill="#0000ff">Z</text>
<text x="757.3" y="455.3" font-size="12.5" fill="#e00000">X</text>
<text x="707.6" y="505" font-size="12" fill="#00e000">Y</text>
</svg>
<div style="left:834px;top:626px;width:25px;height:21px;background:#e1e1e1;box-sizing:border-box;border:1px solid #adadad;"></div>
<div style="left:864px;top:626px;width:25px;height:21px;background:#e1e1e1;box-sizing:border-box;border:1px solid #adadad;"></div>
<svg style="left:834px;top:626px" width="25" height="21" viewBox="0 0 25 21">
<path d="M5.6 10.2Q11.8 3.6 18 10.2Q11.8 16.2 5.6 10.2Z" fill="#f4f4f8" stroke="#444" stroke-width="0.9"/>
<circle cx="11.8" cy="10" r="3.7" fill="#4f74ea"/><circle cx="11.6" cy="10" r="1.5" fill="#0c1640"/><circle cx="11" cy="9.4" r="0.6" fill="#fff"/>
</svg>
<svg style="left:864px;top:626px" width="25" height="21" viewBox="0 0 25 21">
<ellipse cx="7.7" cy="10" rx="3.3" ry="3.8" fill="#f4f4f4" stroke="#111" stroke-width="1.4"/>
<path d="M11.6 13.4L15 16.6" stroke="#111" stroke-width="2.6" stroke-linecap="round"/>
<path d="M8.6 2.2L14.4 6.4L19.9 1.9L15.8 7.8L19.6 14.2L14.4 9.6L9.6 14L13.2 7.8Z" fill="#4f7df0"/>
<path d="M12.4 5.2L14.4 7.2L16.8 4.8L15.1 7.8L16.8 11L14.4 8.8L12.4 10.6L13.8 7.8Z" fill="#a8c6ff"/>
</svg>
<div style="left:0px;top:661px;width:901px;height:1px;background:#a0a0a0;"></div>
</body></html>
